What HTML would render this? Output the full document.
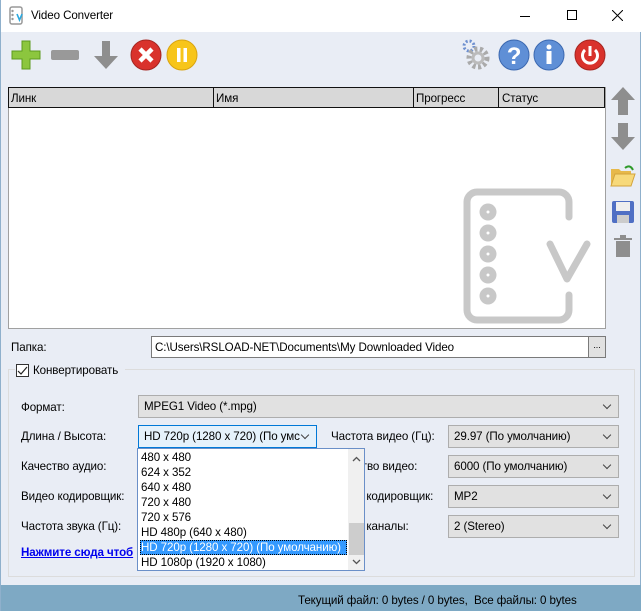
<!DOCTYPE html>
<html><head><meta charset="utf-8"><style>
*{box-sizing:border-box;margin:0;padding:0}
body{width:641px;height:611px;overflow:hidden;background:#e9edf5;font-family:"Liberation Sans","Noto Sans CJK SC",sans-serif;font-size:11.6px;letter-spacing:-0.1px;color:#000;position:relative;border-left:1px solid #8fb0cc;border-right:1px solid #8fb0cc}
.a{position:absolute}
.title{left:0;top:0;width:641px;height:32px;background:#fff}
.combo{position:absolute;height:23px;background:#e1e1e1;border:1px solid #adadad;padding:4px 0 0 5px;white-space:nowrap;overflow:hidden}
.combo:after{content:"";position:absolute;right:8px;top:6px;width:5px;height:5px;border-right:1px solid #444;border-bottom:1px solid #444;transform:rotate(45deg)}
.lbl{position:absolute;white-space:nowrap}
.item{position:absolute;left:2px;height:15px;line-height:15px;padding-left:1px;white-space:nowrap}
</style></head><body>
<div class="a title">
 <svg class="a" style="left:8px;top:6px" width="18" height="20" viewBox="0 0 18 20"><rect x="1" y="1" width="12" height="17" rx="2" fill="none" stroke="#999" stroke-width="1.5"/><circle cx="3.5" cy="5" r="1.2" fill="#999"/><circle cx="3.5" cy="9" r="1.2" fill="#999"/><circle cx="3.5" cy="13" r="1.2" fill="#999"/><path d="M8 8 L10.5 14 L13 8" fill="none" stroke="#2aa9e0" stroke-width="1.6"/></svg>
 <div class="lbl" style="left:30px;top:9px">Video Converter</div>
 <div class="a" style="left:519px;top:16px;width:10px;height:1px;background:#000"></div>
 <div class="a" style="left:566px;top:10px;width:10px;height:10px;border:1px solid #000"></div>
 <svg class="a" style="left:611px;top:10px" width="11" height="11"><path d="M0 0L11 11M11 0L0 11" stroke="#000" stroke-width="1"/></svg>
</div>
<svg class="a" style="left:10px;top:40px" width="30" height="30"><path d="M11 1h8v10h10v8H19v10h-8V19H1v-8h10z" fill="#8cc63e" stroke="#5d9a1e"/></svg>
<div class="a" style="left:50px;top:50px;width:28px;height:10px;background:#999;border-radius:2px"></div>
<svg class="a" style="left:90px;top:40px" width="30" height="30"><path d="M11 1h8v15h8L15 29 3 16h8z" fill="#8e8e8e"/></svg>
<svg class="a" style="left:128px;top:38px" width="34" height="34"><circle cx="17" cy="17" r="15" fill="#d9322c" stroke="#a52520"/><path d="M11 11L23 23M23 11L11 23" stroke="#fff" stroke-width="4.5"/></svg>
<svg class="a" style="left:164px;top:38px" width="34" height="34"><circle cx="17" cy="17" r="15" fill="#f7c51a" stroke="#d9a410"/><rect x="12" y="10" width="3.5" height="14" fill="#fff"/><rect x="18.5" y="10" width="3.5" height="14" fill="#fff"/></svg>
<svg class="a" style="left:456px;top:38px" width="36" height="36"><circle cx="12" cy="8" r="5" fill="none" stroke="#6d8fcf" stroke-width="3" stroke-dasharray="2 2"/><circle cx="21" cy="20" r="9" fill="none" stroke="#aaa" stroke-width="5" stroke-dasharray="3 2.5"/><circle cx="21" cy="20" r="5" fill="none" stroke="#bbb" stroke-width="3"/></svg>
<svg class="a" style="left:496px;top:38px" width="34" height="34"><circle cx="17" cy="17" r="15" fill="#5f8fd6" stroke="#3b68b0"/><text x="17" y="26" font-family="Liberation Sans" font-weight="bold" font-size="24" fill="#fff" text-anchor="middle">?</text></svg>
<svg class="a" style="left:531px;top:38px" width="34" height="34"><circle cx="17" cy="17" r="15" fill="#5f8fd6" stroke="#3b68b0"/><circle cx="17" cy="9" r="2.5" fill="#fff"/><rect x="14.5" y="13" width="5" height="13" fill="#fff"/></svg>
<svg class="a" style="left:572px;top:38px" width="34" height="34"><circle cx="17" cy="17" r="15" fill="#d9322c" stroke="#a52520"/><path d="M12 12a7.5 7.5 0 1 0 10 0" fill="none" stroke="#fff" stroke-width="3"/><rect x="15.5" y="8" width="3" height="10" fill="#fff"/></svg>
<div class="a" style="left:7px;top:87px;width:598px;height:242px;background:#fff;border:1px solid #a0a0a0"></div>
<div class="a" style="left:7px;top:87px;width:597px;height:21px;background:#d8d8d8;border:1px solid #111"></div>
<div class="a" style="left:212px;top:88px;width:1px;height:19px;background:#111"></div>
<div class="a" style="left:412px;top:88px;width:1px;height:19px;background:#111"></div>
<div class="a" style="left:497px;top:88px;width:1px;height:19px;background:#111"></div>
<div class="lbl" style="left:10px;top:92px">Линк</div>
<div class="lbl" style="left:215px;top:92px">Имя</div>
<div class="lbl" style="left:415px;top:92px">Прогресс</div>
<div class="lbl" style="left:501px;top:92px">Статус</div>
<svg class="a" style="left:462px;top:188px" width="134" height="138"><path d="M106 29 V14 A10 10 0 0 0 96 4 H14 A10 10 0 0 0 4 14 V122 A10 10 0 0 0 14 132 H96 A10 10 0 0 0 106 122 V107" fill="none" stroke="#c8c8c8" stroke-width="7" stroke-linecap="round"/><g fill="#c8c8c8"><circle cx="25" cy="24" r="8.5"/><circle cx="25" cy="45" r="8.5"/><circle cx="25" cy="66" r="8.5"/><circle cx="25" cy="87" r="8.5"/><circle cx="25" cy="108" r="8.5"/></g><g fill="#fff"><circle cx="25" cy="24" r="1.5"/><circle cx="25" cy="45" r="1.5"/><circle cx="25" cy="66" r="1.5"/><circle cx="25" cy="87" r="1.5"/><circle cx="25" cy="108" r="1.5"/></g><path d="M87 56 L104 91 L124 56" fill="none" stroke="#c8c8c8" stroke-width="7" stroke-linecap="round" stroke-linejoin="round"/></svg>
<svg class="a" style="left:609px;top:86px" width="26" height="30"><path d="M13 1L25 14h-7v15h-10V14H1z" fill="#8e8e8e"/></svg>
<svg class="a" style="left:609px;top:122px" width="26" height="30"><path d="M8 1h10v14h7L13 28 1 15h7z" fill="#8e8e8e"/></svg>
<svg class="a" style="left:609px;top:163px" width="26" height="25"><path d="M1 6h8l2 2h10v15H1z" fill="#e7b94a"/><path d="M1 23L5 11h20l-4 12z" fill="#f7d97a" stroke="#d3a43c"/><path d="M15 5q5-4 8 2" fill="none" stroke="#2f9a2a" stroke-width="2"/></svg>
<svg class="a" style="left:610px;top:200px" width="24" height="24"><rect x="1" y="1" width="22" height="22" rx="2" fill="#4f6fc4"/><rect x="5" y="2" width="14" height="9" fill="#eee"/><rect x="6" y="15" width="12" height="8" fill="#ccc"/></svg>
<svg class="a" style="left:612px;top:234px" width="20" height="24"><rect x="1" y="4" width="18" height="2" fill="#8e8e8e"/><rect x="7" y="1" width="6" height="3" fill="#8e8e8e"/><rect x="3" y="7" width="14" height="16" fill="#8e8e8e"/></svg>
<div class="lbl" style="left:10px;top:341px">Папка:</div>
<div class="a" style="left:150px;top:336px;width:438px;height:22px;background:#fff;border:1px solid #7a7a7a;padding:4px 0 0 3px;white-space:nowrap">C:\Users\RSLOAD-NET\Documents\My Downloaded Video</div>
<div class="a" style="left:587px;top:336px;width:18px;height:22px;background:#e1e1e1;border:1px solid #7a7a7a;text-align:center;font-size:9px;line-height:17px">...</div>
<div class="a" style="left:7px;top:369px;width:627px;height:208px;border:1px solid #dcdcdc"></div>
<div class="a" style="left:14px;top:363px;width:110px;height:14px;background:#e9edf5"></div>
<div class="a" style="left:15px;top:364px;width:13px;height:13px;background:#fff;border:1px solid #333"></div>
<svg class="a" style="left:16px;top:366px" width="11" height="10"><path d="M1 5l3 3 6-7" fill="none" stroke="#222" stroke-width="1.2"/></svg>
<div class="lbl" style="left:32px;top:364px">Конвертировать</div>
<div class="lbl" style="left:20px;top:401px">Формат:</div>
<div class="combo" style="left:137px;top:395px;width:481px">MPEG1 Video (*.mpg)</div>
<div class="lbl" style="left:20px;top:430px">Длина / Высота:</div>
<div class="combo" style="left:137px;top:425px;width:179px;background:#e5f1fb;border-color:#0078d7">HD 720p (1280 x 720) (По умс</div>
<div class="lbl" style="left:330px;top:430px">Частота видео (Гц):</div>
<div class="combo" style="left:447px;top:425px;width:171px">29.97 (По умолчанию)</div>
<div class="lbl" style="left:20px;top:460px">Качество аудио:</div>
<div class="lbl" style="left:330px;top:460px">Качество видео:</div>
<div class="combo" style="left:447px;top:455px;width:171px">6000 (По умолчанию)</div>
<div class="lbl" style="left:20px;top:490px">Видео кодировщик:</div>
<div class="lbl" style="left:330px;top:490px">Аудио кодировщик:</div>
<div class="combo" style="left:447px;top:485px;width:171px">MP2</div>
<div class="lbl" style="left:20px;top:520px">Частота звука (Гц):</div>
<div class="lbl" style="left:330px;top:520px">Аудио каналы:</div>
<div class="combo" style="left:447px;top:515px;width:171px">2 (Stereo)</div>
<div class="lbl" style="left:20px;top:546px;color:#0000ee;font-weight:bold;text-decoration:underline">Нажмите сюда чтоб</div>
<div class="a" style="left:136px;top:448px;width:228px;height:123px;background:#fff;border:1px solid #6a8fc8;overflow:hidden">
 <div class="item" style="top:1px">480 x 480</div>
 <div class="item" style="top:16px">624 x 352</div>
 <div class="item" style="top:31px">640 x 480</div>
 <div class="item" style="top:46px">720 x 480</div>
 <div class="item" style="top:61px">720 x 576</div>
 <div class="item" style="top:76px">HD 480p (640 x 480)</div>
 <div class="item" style="top:91px;width:207px;background:#3399ff;color:#fff;outline:1px dotted #000;outline-offset:-1px;overflow:hidden">HD 720p (1280 x 720) (По умолчанию)</div>
 <div class="item" style="top:106px">HD 1080p (1920 x 1080)</div>
 <div class="a" style="left:210px;top:0;width:17px;height:121px;background:#f0f0f0"></div>
 <div class="a" style="left:211px;top:74px;width:15px;height:32px;background:#cdcdcd"></div>
 <svg class="a" style="left:214px;top:7px" width="9" height="6"><path d="M1 5l3.5-3.5L8 5" fill="none" stroke="#555" stroke-width="1.3"/></svg>
 <svg class="a" style="left:214px;top:110px" width="9" height="6"><path d="M1 1l3.5 3.5L8 1" fill="none" stroke="#555" stroke-width="1.3"/></svg>
</div>
<div class="a" style="left:0;top:585px;width:641px;height:26px;background:#7ea9c4"></div>
<div class="lbl" style="left:297px;top:594px">Текущий файл: 0 bytes / 0 bytes,&nbsp; Все файлы: 0 bytes</div>
</body></html>
